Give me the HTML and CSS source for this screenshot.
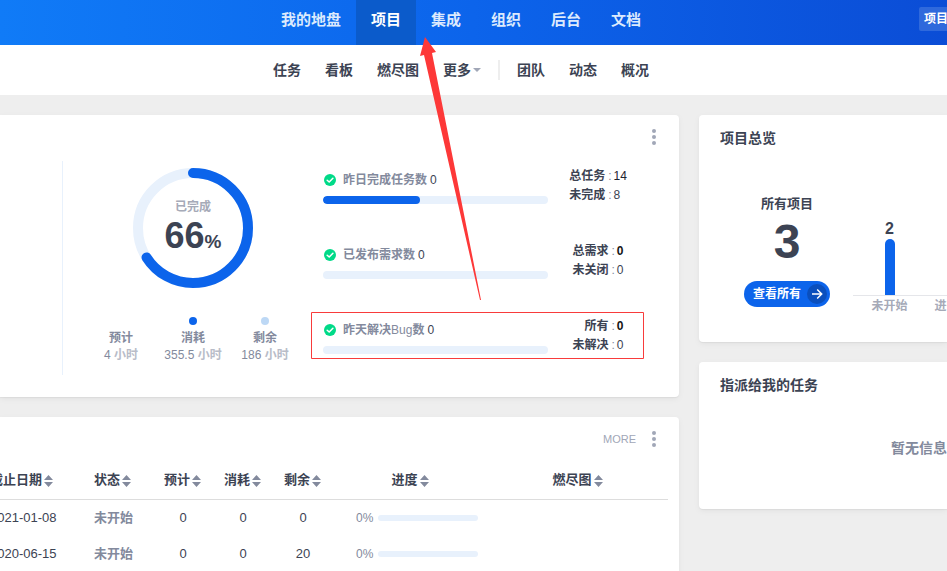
FILE: index.html
```html
<!DOCTYPE html>
<html lang="zh-CN">
<head>
<meta charset="utf-8">
<title>项目</title>
<link rel="stylesheet" href="styles.css">
</head>
<body>
<svg class="defs" aria-hidden="true">
  <symbol id="check" viewBox="0 0 12 12"><circle cx="6" cy="6" r="6" fill="#00da88"/><path d="M3.2 6.2 5.2 8 8.9 4.3" fill="none" stroke="#fff" stroke-width="1.5" stroke-linecap="round" stroke-linejoin="round"/></symbol>
  <symbol id="sort" viewBox="0 0 9 12"><path d="M4.5 0 9 5H0zM0 7h9l-4.500 5z" fill="#838a9d"/></symbol>
  <symbol id="dots" viewBox="0 0 4 16"><g fill="#a1a7b7"><circle cx="2" cy="2" r="2"/><circle cx="2" cy="8" r="2"/><circle cx="2" cy="14" r="2"/></g></symbol>
</svg>
<header class="topbar">
  <nav class="main-nav">
    <a href="#">我的地盘</a><a href="#" class="active">项目</a><a href="#">集成</a><a href="#">组织</a><a href="#">后台</a><a href="#">文档</a>
  </nav>
  <button class="scope" type="button">项目</button>
</header>
<nav class="sub-nav">
  <a href="#">任务</a><a href="#">看板</a><a href="#">燃尽图</a><a href="#" class="more">更多<i class="caret"></i></a><i class="divider"></i><a href="#">团队</a><a href="#">动态</a><a href="#">概况</a>
</nav>
<main class="page">
  <div class="column">
    <section class="card card-left">
      <div class="card-tools"><button class="dots" type="button" aria-label="菜单"><svg><use href="#dots"/></svg></button></div>
      <div class="stats">
        <div class="stats-list"></div>
        <div class="overview">
          <div class="ring">
            <svg viewBox="0 0 120 120"><g fill="none" stroke-width="10" transform="rotate(-90 60 60)"><circle cx="60" cy="60" r="55" stroke="#e8f1fc"/><circle cx="60" cy="60" r="55" stroke="#0c64eb" pathLength="100" stroke-dasharray="66 100" stroke-linecap="round"/></g></svg>
            <div class="ring-text"><span>已完成</span><strong>66<small>%</small></strong></div>
          </div>
          <dl class="hours">
            <div><dt>预计</dt><dd>4 <b>小时</b></dd></div>
            <div class="spent"><dt>消耗</dt><dd>355.5 <b>小时</b></dd></div>
            <div class="left"><dt>剩余</dt><dd>186 <b>小时</b></dd></div>
          </dl>
        </div>
        <div class="progress-list">
          <div class="item">
            <div class="item-main"><p><svg><use href="#check"/></svg><b>昨日完成任务数</b> <span>0</span></p><div class="bar"><i style="width:43%"></i></div></div>
            <dl class="totals"><dt>总任务</dt><dd class="medium">14</dd><dt>未完成</dt><dd>8</dd></dl>
          </div>
          <div class="item">
            <div class="item-main"><p><svg><use href="#check"/></svg><b>已发布需求数</b> <span>0</span></p><div class="bar"></div></div>
            <dl class="totals"><dt>总需求</dt><dd class="strong">0</dd><dt>未关闭</dt><dd>0</dd></dl>
          </div>
          <div class="item">
            <div class="item-main"><p><svg><use href="#check"/></svg><b>昨天解决<em>Bug</em>数</b> <span>0</span></p><div class="bar"></div></div>
            <dl class="totals"><dt>所有</dt><dd class="strong">0</dd><dt>未解决</dt><dd>0</dd></dl>
          </div>
        </div>
      </div>
    </section>
    <section class="card card-left table-card">
      <div class="card-tools"><a href="#" class="more-link">MORE</a><button class="dots" type="button" aria-label="菜单"><svg><use href="#dots"/></svg></button></div>
      <table>
        <colgroup><col><col class="c-status"><col class="c-num"><col class="c-num"><col class="c-num"><col class="c-progress"><col class="c-chart"></colgroup>
        <thead><tr>
          <th>截止日期<svg><use href="#sort"/></svg></th><th>状态<svg><use href="#sort"/></svg></th>
          <th class="center">预计<svg><use href="#sort"/></svg></th><th class="center">消耗<svg><use href="#sort"/></svg></th><th class="center">剩余<svg><use href="#sort"/></svg></th>
          <th class="center">进度<svg><use href="#sort"/></svg></th><th class="center">燃尽图<svg><use href="#sort"/></svg></th>
        </tr></thead>
        <tbody>
          <tr><td>2021-01-08</td><td class="status">未开始</td><td class="center">0</td><td class="center">0</td><td class="center">0</td><td><div class="rate">0%<i></i></div></td><td></td></tr>
          <tr><td>2020-06-15</td><td class="status">未开始</td><td class="center">0</td><td class="center">0</td><td class="center">20</td><td><div class="rate">0%<i></i></div></td><td></td></tr>
        </tbody>
      </table>
    </section>
  </div>
  <aside class="column">
    <section class="card card-right">
      <h2>项目总览</h2>
      <div class="projects">
        <div class="count">
          <h3>所有项目</h3>
          <strong>3</strong>
          <a href="#" class="view-all">查看所有<svg viewBox="0 0 20 20"><circle cx="10" cy="10" r="10" fill="#0a4fbd"/><path d="M5 10h9.500M10.200 5.500l4.500 4.500-4.500 4.500" fill="none" stroke="#fff" stroke-width="1.500"/></svg></a>
        </div>
        <div class="chart">
          <div class="chart-col"><span>2</span><i></i><em>未开始</em></div>
          <div class="chart-col"><em>进行中</em></div>
        </div>
      </div>
    </section>
    <section class="card card-right">
      <h2>指派给我的任务</h2>
      <p class="empty">暂无信息</p>
    </section>
  </aside>
</main>
<svg class="annotation" viewBox="0 0 947 571" aria-hidden="true"><path d="M425 37 436 52 432 53 481 300H480L424 55 420 56z" fill="#fd3838"/><path d="M311.500 312.500h332v46h-332z" fill="none" stroke="#f83b3b"/></svg>
</body>
</html>
```
FILE: styles.css
```css
* { box-sizing: border-box; }
body {
  margin: 0;
  height: 100vh;
  overflow: hidden;
  position: relative;
  background: #eee;
  color: #3c4353;
  font: 13px/20px "Liberation Sans", "Noto Sans CJK SC", sans-serif;
}
a { color: inherit; text-decoration: none; }
button { border: 0; padding: 0; background: none; font: inherit; color: inherit; }
h2, h3, p, dl, dd { margin: 0; }
em, i { font-style: normal; }
svg { display: block; }
.defs { position: absolute; width: 0; height: 0; }

.topbar {
  display: grid;
  grid-template-columns: 1fr auto 1fr;
  height: 45px;
  padding-right: 25px;
  background: linear-gradient(90deg, #107bf7 0%, #0c64eb 50%, #0b4dd6 100%);
}
.main-nav { grid-column: 2; display: flex; }
.main-nav a {
  padding: 0 15px;
  font-size: 15px;
  font-weight: 700;
  line-height: 40px;
  color: #dceafd;
}
.main-nav a.active { background: #0b5bcb; color: #fff; }
.scope {
  justify-self: end;
  width: 60px;
  height: 24px;
  margin: 7px -57px 0 0;
  padding-left: 5px;
  border-radius: 2px;
  background: #2f69dc;
  color: #fff;
  font-size: 12px;
  font-weight: 700;
  line-height: 22px;
  text-align: left;
}
.sub-nav {
  display: flex;
  align-items: center;
  justify-content: center;
  height: 50px;
  padding-right: 25px;
  background: #fff;
  font-size: 14px;
  font-weight: 700;
}
.sub-nav a { padding: 0 12px; }
.more { display: flex; align-items: center; gap: 2px; }
.caret { border: 4px solid transparent; border-top-color: #a1a7b7; border-bottom: 0; }
.divider { width: 2px; height: 20px; margin: 0 5px; background: #eee; }

.page {
  display: grid;
  grid-template-columns: minmax(0, 1fr) 248px;
  gap: 20px;
  padding-top: 20px;
}
.column { display: flex; flex-direction: column; gap: 20px; }
.card {
  background: #fff;
  overflow: hidden;
  box-shadow: 0 1px 1px rgba(0, 0, 0, .05), 0 2px 6px rgba(0, 0, 0, .05);
}
.card-left { border-radius: 0 4px 4px 0; }
.card-right { border-radius: 4px 0 0 4px; }
.table-card { padding-bottom: 20px; }
.card-tools {
  display: flex;
  align-items: center;
  justify-content: flex-end;
  gap: 16px;
  height: 44px;
  padding-right: 23px;
}
.dots svg { width: 4px; height: 16px; }
.more-link { font-size: 11px; color: #a1a7b7; }

.stats { display: flex; padding: 2px 31px 22px 0; }
.stats-list { flex: 1; border-right: 1px solid #e8f1fc; }
.overview { width: 260px; padding-top: 7px; height: 214px; }
.ring { position: relative; width: 120px; margin: 0 auto; }
.ring-text {
  position: absolute;
  inset: 0;
  display: flex;
  flex-direction: column;
  align-items: center;
  padding-top: 29px;
}
.ring-text span { font-size: 12px; font-weight: 700; color: #a6aab8; }
.ring-text strong { font-size: 36px; line-height: 38px; }
.ring-text small { font-size: 19px; }
.hours {
  display: flex;
  justify-content: center;
  margin-top: 29px;
  text-align: center;
  font-size: 12px;
  line-height: 17px;
  color: #838a9d;
}
.hours div { width: 72px; white-space: nowrap; }
.hours div::before {
  content: "";
  display: block;
  width: 8px;
  height: 8px;
  margin: 0 auto 5px;
  border-radius: 50%;
}
.hours .spent::before { background: #0c64eb; }
.hours .left::before { background: #bdd8f5; }
.hours dt { font-weight: 700; }
.hours b { color: #b8bcc8; }

.item { display: flex; height: 75px; font-size: 12px; }
.item:last-child { height: 64px; }
.item-main { width: 225px; padding-top: 9px; }
.item-main p { display: flex; align-items: center; gap: 3px; color: #838a9d; }
.item-main p svg { width: 12px; height: 12px; margin: 0 4px 0 1px; }
.item-main em { font-weight: 400; }
.item-main span { color: #3c4353; }
.bar { height: 8px; margin-top: 6px; border-radius: 4px; background: #e8f1fc; overflow: hidden; }
.bar i { display: block; height: 8px; border-radius: 4px; background: #0c64eb; }
.totals {
  display: grid;
  grid-template-columns: auto auto;
  justify-content: center;
  align-content: start;
  width: 100px;
  padding-top: 6px;
  line-height: 19px;
}
.totals dt { text-align: right; font-weight: 700; }
.totals dd::before { content: ":"; padding: 0 2px 0 3px; font-weight: 400; color: #838a9d; }
.totals .medium { color: #1f2430; }
.totals .strong { font-weight: 700; color: #141414; }

table {
  width: calc(100% - 1px);
  margin-left: -10px;
  table-layout: fixed;
  border-collapse: collapse;
}
.c-status { width: 59px; }
.c-num { width: 60px; }
.c-progress { width: 155px; }
.c-chart { width: 180px; }
th, td { padding: 0; text-align: left; white-space: nowrap; }
th { height: 38px; border-bottom: 1px solid #ddd; }
th svg { display: inline-block; width: 9px; height: 12px; margin-left: 2px; vertical-align: -3px; }
td { height: 36px; padding-top: 2px; }
th.center { padding-right: 1px; text-align: center; }
td.center { text-align: center; }
.status { font-weight: 700; color: #838a9d; }
.rate { display: flex; align-items: center; gap: 5px; padding-left: 23px; font-size: 12px; color: #838a9d; }
.rate i { width: 100px; height: 6px; border-radius: 3px; background: #e8f1fc; }

h2 { padding: 13px 21px 0; font-size: 14px; line-height: 20px; }
.projects { display: flex; height: 194px; padding: 46px 0 0 45px; }
.count { display: flex; flex-direction: column; align-items: center; flex: none; width: 86px; }
h3 { font-size: 13px; line-height: 20px; }
.count strong { margin-top: 4px; font-size: 48px; line-height: 48px; }
.view-all {
  display: flex;
  align-items: center;
  justify-content: space-between;
  width: 86px;
  height: 26px;
  margin-top: 15px;
  padding: 0 3px 0 9px;
  border-radius: 13px;
  background: #0c64eb;
  color: #fff;
  font-size: 12px;
  font-weight: 700;
}
.view-all svg { width: 20px; height: 20px; }
.chart {
  display: flex;
  align-items: flex-end;
  flex: none;
  height: 122px;
  margin-left: 23px;
  padding-left: 5px;
  background: linear-gradient(#e5e6ea, #e5e6ea) 0 101px / 100% 1px no-repeat;
}
.chart-col { display: flex; flex-direction: column; align-items: center; width: 63px; }
.chart-col span { font-size: 16px; font-weight: 700; line-height: 20px; }
.chart-col i { width: 10px; height: 56px; border-radius: 5px 5px 0 0; background: #0c64eb; }
.chart-col em { padding-top: 1px; font-size: 12px; font-weight: 700; color: #a6aab8; }
.empty { padding: 43px 0 51px 192px; font-size: 14px; font-weight: 700; line-height: 20px; white-space: nowrap; color: #838a9d; }

.annotation { position: absolute; top: 0; left: 0; width: 947px; height: 571px; pointer-events: none; }
```
